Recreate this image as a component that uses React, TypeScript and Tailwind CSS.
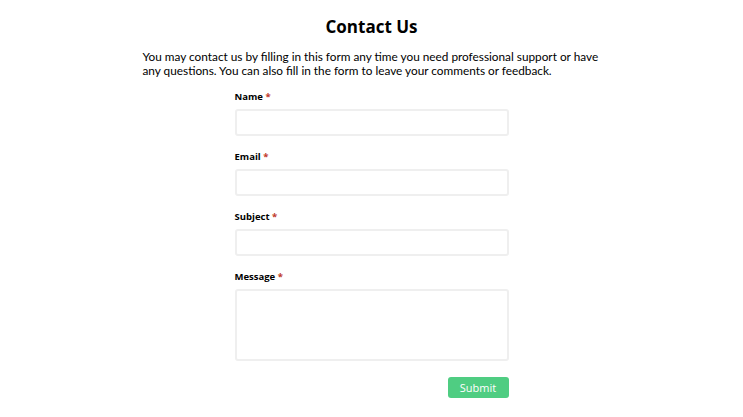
import React from "react";

const Field = ({ label, area }: { label: string; area?: boolean }) => {
  return (
    <div className="flex flex-col">
      <label className="text-[9.5px] font-bold text-black leading-[14px] mb-[5px]">
        {label} <span className="text-[#c0392b]">*</span>
      </label>
      {area ? (
        <textarea className="w-full h-[72px] border-2 border-[#efefef] rounded-[3px] outline-none resize-none" />
      ) : (
        <input type="text" className="w-full h-[27px] border-2 border-[#efefef] rounded-[3px] outline-none" />
      )}
    </div>
  );
};

const App = () => {
  return (
    <div className="flex flex-col items-center bg-white min-h-[417px] font-['Open_Sans',sans-serif] text-black">
      <h1 className="text-[17px] font-bold mt-[15px] leading-[24px]">Contact Us</h1>
      <p className="w-[462px] pl-[2px] text-[11.8px] leading-[14px] mt-[11px] font-['Lato',sans-serif]">
        You may contact us by filling in this form any time you need professional support or have
        any questions. You can also fill in the form to leave your comments or feedback.
      </p>
      <form className="w-[274px] flex flex-col gap-[14px] mt-[12px]">
        <Field label="Name" />
        <Field label="Email" />
        <Field label="Subject" />
        <Field label="Message" area />
        <div className="flex justify-end mt-[2px]">
          <button type="button" className="w-[61px] h-[21px] bg-[#4fcd82] rounded-[3px] text-white text-[11px] leading-[21px]">
            Submit
          </button>
        </div>
      </form>
    </div>
  );
};

export default App;
